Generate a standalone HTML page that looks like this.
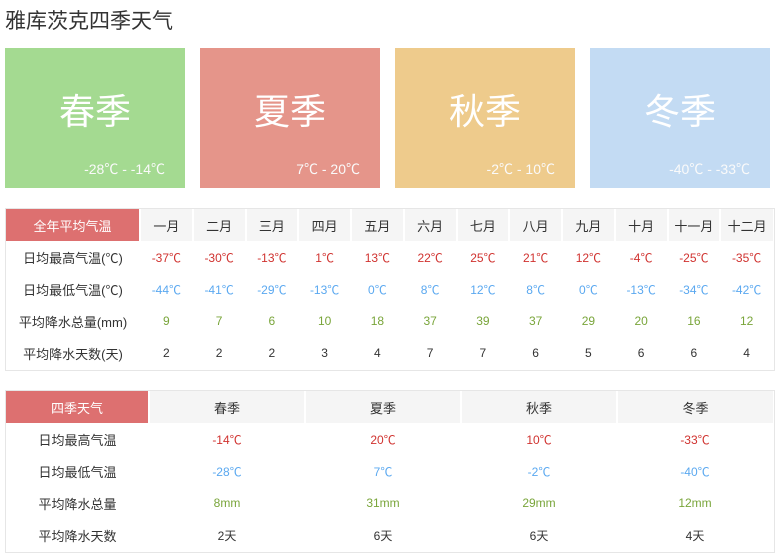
<!DOCTYPE html>
<html><head><meta charset="utf-8"><style>
*{margin:0;padding:0;box-sizing:border-box}
body{width:779px;height:555px;background:#fff;font-family:"Liberation Sans","Noto Sans CJK SC",sans-serif;color:#333;position:relative;overflow:hidden}
.title{position:absolute;left:5px;top:8px;font-size:21px;color:#333;line-height:28px}
.card{position:absolute;top:48px;width:180px;height:140px;color:#fff}
.cn{display:block;padding-top:42px;height:88px;text-align:center;font-size:36px;line-height:44px;color:#fff}
.ct{display:block;text-align:right;padding-right:20px;margin-top:23px;font-size:14px;line-height:20px;color:#fafafa}
table{position:absolute;border-collapse:collapse;table-layout:fixed;font-size:12px}
td{text-align:center;height:32px;padding:0;white-space:nowrap}
.box{position:absolute;border:1px solid #e6e6e6}
.h td{background:#f5f5f5;border-left:2px solid #fff;font-size:13px;color:#333}
.h td.f{background:#dd7070;color:#fff;border-left:0;font-size:13px}
.r{color:#d0322f}.b{color:#5aa8f0}.g{color:#79a53a}
.l{color:#333;font-size:13px}
</style></head><body>
<div class="title">雅库茨克四季天气</div>
<div class="card" style="left:5px;background:#a4da91"><span class="cn">春季</span><span class="ct">-28℃ - -14℃</span></div>
<div class="card" style="left:200px;background:#e5958a"><span class="cn">夏季</span><span class="ct">7℃ - 20℃</span></div>
<div class="card" style="left:395px;background:#eecb8c"><span class="cn">秋季</span><span class="ct">-2℃ - 10℃</span></div>
<div class="card" style="left:590px;background:#c3dbf3"><span class="cn">冬季</span><span class="ct">-40℃ - -33℃</span></div>

<div class="box" style="left:5px;top:208px;width:770px;height:163px"></div>
<table style="left:6px;top:209px;width:767px">
<colgroup><col style="width:134px"><col span="12" style="width:52.75px"></colgroup>
<tr class="h"><td class="f">全年平均气温</td><td>一月</td><td>二月</td><td>三月</td><td>四月</td><td>五月</td><td>六月</td><td>七月</td><td>八月</td><td>九月</td><td>十月</td><td>十一月</td><td>十二月</td></tr>
<tr class="r"><td class="l">日均最高气温(℃)</td><td>-37℃</td><td>-30℃</td><td>-13℃</td><td>1℃</td><td>13℃</td><td>22℃</td><td>25℃</td><td>21℃</td><td>12℃</td><td>-4℃</td><td>-25℃</td><td>-35℃</td></tr>
<tr class="b"><td class="l">日均最低气温(℃)</td><td>-44℃</td><td>-41℃</td><td>-29℃</td><td>-13℃</td><td>0℃</td><td>8℃</td><td>12℃</td><td>8℃</td><td>0℃</td><td>-13℃</td><td>-34℃</td><td>-42℃</td></tr>
<tr class="g"><td class="l">平均降水总量(mm)</td><td>9</td><td>7</td><td>6</td><td>10</td><td>18</td><td>37</td><td>39</td><td>37</td><td>29</td><td>20</td><td>16</td><td>12</td></tr>
<tr style="color:#333"><td class="l">平均降水天数(天)</td><td>2</td><td>2</td><td>2</td><td>3</td><td>4</td><td>7</td><td>7</td><td>6</td><td>5</td><td>6</td><td>6</td><td>4</td></tr>
</table>

<div class="box" style="left:5px;top:390px;width:770px;height:163px"></div>
<table style="left:6px;top:391px;width:767px">
<colgroup><col style="width:143px"><col span="4" style="width:156px"></colgroup>
<tr class="h"><td class="f">四季天气</td><td>春季</td><td>夏季</td><td>秋季</td><td>冬季</td></tr>
<tr class="r"><td class="l">日均最高气温</td><td>-14℃</td><td>20℃</td><td>10℃</td><td>-33℃</td></tr>
<tr class="b"><td class="l">日均最低气温</td><td>-28℃</td><td>7℃</td><td>-2℃</td><td>-40℃</td></tr>
<tr class="g"><td class="l">平均降水总量</td><td>8mm</td><td>31mm</td><td>29mm</td><td>12mm</td></tr>
<tr style="color:#333"><td class="l">平均降水天数</td><td>2天</td><td>6天</td><td>6天</td><td>4天</td></tr>
</table>
</body></html>
